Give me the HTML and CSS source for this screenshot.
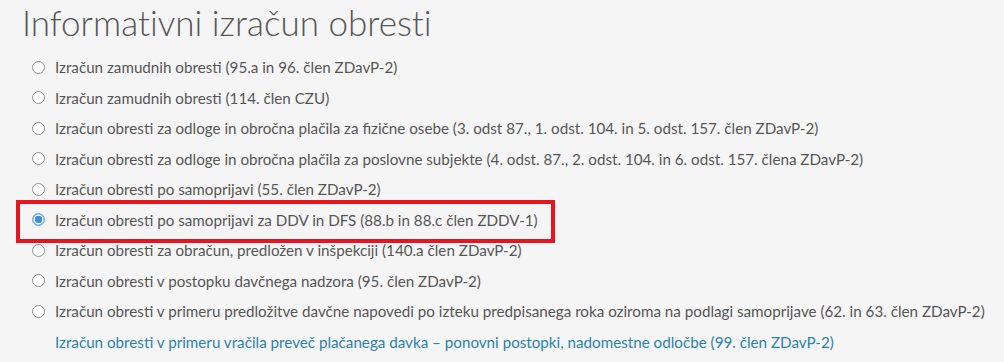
FILE: index.html
```html
<!DOCTYPE html>
<html lang="sl">
<head>
    <meta charset="UTF-8">
    <meta name="viewport" content="width=device-width, initial-scale=1.0">
    <title>Informativni izračun obresti</title>
    <link rel="stylesheet" href="styles.css">
</head>
<body>
    <div class="container">
        <h1>Informativni izračun obresti</h1>

        <div class="options">
            <label class="option">
                <input type="radio" name="calc" value="1">
                <span>Izračun zamudnih obresti (95.a in 96. člen ZDavP-2)</span>
            </label>
            <label class="option">
                <input type="radio" name="calc" value="2">
                <span>Izračun zamudnih obresti (114. člen CZU)</span>
            </label>
            <label class="option">
                <input type="radio" name="calc" value="3">
                <span>Izračun obresti za odloge in obročna plačila za fizične osebe (3. odst 87., 1. odst. 104. in 5. odst. 157. člen ZDavP-2)</span>
            </label>
            <label class="option">
                <input type="radio" name="calc" value="4">
                <span>Izračun obresti za odloge in obročna plačila za poslovne subjekte (4. odst. 87., 2. odst. 104. in 6. odst. 157. člena ZDavP-2)</span>
            </label>
            <label class="option">
                <input type="radio" name="calc" value="5">
                <span>Izračun obresti po samoprijavi (55. člen ZDavP-2)</span>
            </label>
            <!-- marked option -->
            <label class="option marked">
                <input type="radio" name="calc" value="6" checked>
                <span>Izračun obresti po samoprijavi za DDV in DFS (88.b in 88.c člen ZDDV-1)</span>
            </label>
            <label class="option">
                <input type="radio" name="calc" value="7">
                <span>Izračun obresti za obračun, predložen v inšpekciji (140.a člen ZDavP-2)</span>
            </label>
            <label class="option">
                <input type="radio" name="calc" value="8">
                <span>Izračun obresti v postopku davčnega nadzora (95. člen ZDavP-2)</span>
            </label>
            <label class="option">
                <input type="radio" name="calc" value="9">
                <span>Izračun obresti v primeru predložitve davčne napovedi po izteku predpisanega roka oziroma na podlagi samoprijave (62. in 63. člen ZDavP-2)</span>
            </label>
            <a class="option link" href="#">Izračun obresti v primeru vračila preveč plačanega davka – ponovni postopki, nadomestne odločbe (99. člen ZDavP-2)</a>
        </div>
    </div>
</body>
</html>
```

FILE: styles.css
```css
body {
    margin: 0;
    padding: 0;
    background: #f5f5f5;
    font-family: 'Lato', 'Open Sans', sans-serif;
    color: #555;
}

.container {
    padding: 0 22px;
}

h1 {
    margin: 0;
    padding-top: 0;
    font-size: 35px;
    font-weight: 300;
    line-height: 44px;
    color: #555;
    font-variant-ligatures: none;
}

.options {
    display: flex;
    flex-direction: column;
    align-items: flex-start;
    margin-top: 8px;
    padding-left: 10px;
}

.option {
    position: relative;
    display: flex;
    align-items: center;
    gap: 10px;
    height: 30.5px;
    font-size: 15.2px;
    color: #555;
    white-space: nowrap;
    cursor: pointer;
}

.option input {
    appearance: none;
    -webkit-appearance: none;
    width: 13px;
    height: 13px;
    margin: 0;
    border: 1px solid #8f8f8f;
    border-radius: 50%;
    background: #fff;
    flex-shrink: 0;
}

.option input:checked {
    border-color: #5d9fe0;
    background: radial-gradient(circle, #3b8fe0 0, #3b8fe0 3.5px, #fff 4px, #fff 4.5px, #a9cdf2 5px);
}

.marked::after {
    content: "";
    position: absolute;
    left: -16px;
    right: -17px;
    top: -5px;
    bottom: -8px;
    border: 4px solid #e8141f;
}

.link {
    padding-left: 23px;
    color: #2a82ad;
    text-decoration: none;
}
```
